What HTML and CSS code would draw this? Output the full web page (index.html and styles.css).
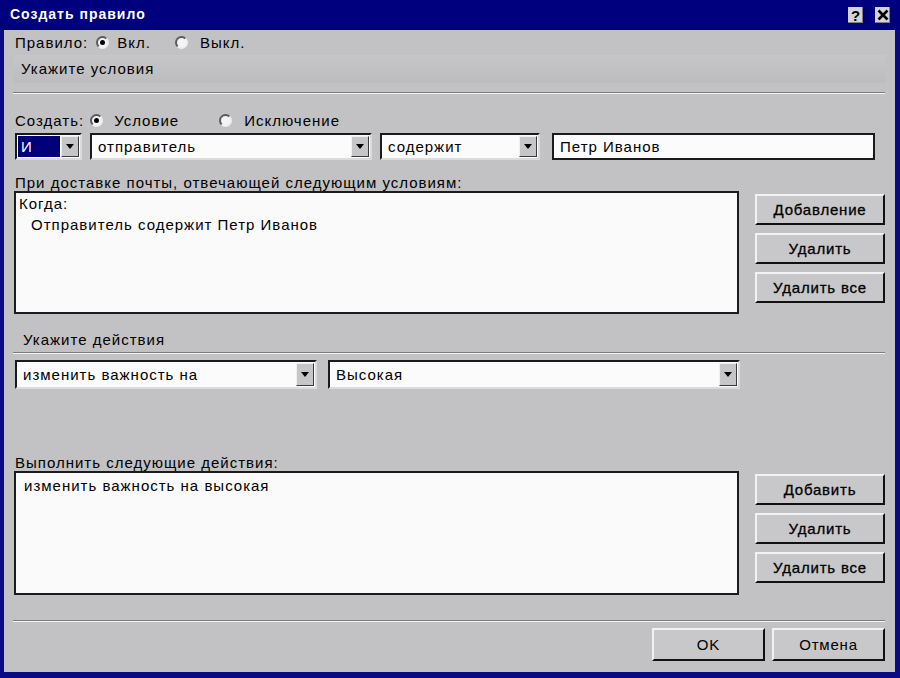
FILE: index.html
```html
<!DOCTYPE html>
<html lang="ru">
<head>
<meta charset="utf-8">
<title>Создать правило</title>
<link rel="stylesheet" href="styles.css">
</head>
<body>
<div class="window">
  <div class="titlebar">
    <span class="title">Создать правило</span>
    <div class="title-btns">
      <span class="tbtn">?</span>
      <span class="tbtn close">
        <svg width="12" height="12" viewBox="0 0 12 12"><path d="M1.5 1.5 L10.5 10.5 M10.5 1.5 L1.5 10.5" stroke="#000" stroke-width="2.6"/></svg>
      </span>
    </div>
  </div>
  <div class="body">
    <div class="row rule-row">
      <span class="lbl">Правило:</span>
      <span class="radio on"></span><span class="lbl r-text">Вкл.</span>
      <span class="radio r2"></span><span class="lbl r-text2">Выкл.</span>
    </div>
    <div class="section-head">Укажите условия</div>
    <div class="sep"></div>

    <div class="row create-row">
      <span class="lbl">Создать:</span>
      <span class="radio on c1"></span><span class="lbl c-text">Условие</span>
      <span class="radio c2"></span><span class="lbl c-text2">Исключение</span>
    </div>

    <div class="row combo-row">
      <div class="combo w-and"><span class="val selected">И</span><span class="drop"></span></div>
      <div class="combo w-field"><span class="val">отправитель</span><span class="drop"></span></div>
      <div class="combo w-op"><span class="val">содержит</span><span class="drop"></span></div>
      <div class="input w-value">Петр Иванов</div>
    </div>

    <div class="field-label">При доставке почты, отвечающей следующим условиям:</div>
    <div class="list-block">
      <div class="listbox">
        <div class="line">Когда:</div>
        <div class="line indent">Отправитель содержит Петр Иванов</div>
      </div>
      <div class="btn-col">
        <button class="btn">Добавление</button>
        <button class="btn">Удалить</button>
        <button class="btn">Удалить все</button>
      </div>
    </div>

    <div class="section-head2">Укажите действия</div>
    <div class="sep"></div>

    <div class="row action-row">
      <div class="combo w-action"><span class="val">изменить важность на</span><span class="drop"></span></div>
      <div class="combo w-level"><span class="val">Высокая</span><span class="drop"></span></div>
    </div>

    <div class="field-label label2">Выполнить следующие действия:</div>
    <div class="list-block">
      <div class="listbox lb2">
        <div class="line indent2">изменить важность на высокая</div>
      </div>
      <div class="btn-col">
        <button class="btn">Добавить</button>
        <button class="btn">Удалить</button>
        <button class="btn">Удалить все</button>
      </div>
    </div>

    <div class="sep sep-bottom"></div>
    <div class="footer">
      <button class="btn btn-ok">OK</button>
      <button class="btn btn-ok">Отмена</button>
    </div>
  </div>
</div>
</body>
</html>
```

FILE: styles.css
```css
* { box-sizing: border-box; }
html, body {
  margin: 0;
  padding: 0;
  width: 900px;
  height: 678px;
  overflow: hidden;
  background: #00007c;
}
body {
  font-family: "Liberation Sans", Arial, sans-serif;
  font-size: 15px;
  letter-spacing: 1px;
  color: #000;
}
.window {
  width: 900px;
  height: 678px;
  background: #c2c2c4;
  border-left: 4px solid #0a0a86;
  border-right: 5px solid #0a0a86;
  border-bottom: 6px solid #0a0a86;
  display: flex;
  flex-direction: column;
}
.titlebar {
  height: 30px;
  background: #00007e;
  display: flex;
  align-items: center;
  justify-content: space-between;
  margin: 0 -5px 0 -4px;
  padding: 0 5px 0 10px;
}
.title {
  color: #fff;
  font-weight: bold;
  font-size: 14px;
  letter-spacing: 1px;
  margin-top: -2px;
}
.title-btns {
  display: flex;
  gap: 12px;
  margin-right: 5px;
}
.tbtn {
  width: 15px;
  height: 16px;
  background: #d4d4d6;
  display: flex;
  align-items: center;
  justify-content: center;
  font-weight: bold;
  font-size: 15px;
  letter-spacing: 0;
  color: #000;
  box-shadow: inset -1px -1px 0 #808080;
}
.body {
  flex: 1;
  padding: 0 10px 0 11px;
  display: flex;
  flex-direction: column;
}
.row {
  display: flex;
  align-items: center;
}
.rule-row {
  height: 24px;
}
.lbl { white-space: nowrap; }
.radio {
  width: 13px;
  height: 13px;
  border-radius: 50%;
  background: #f4f4f4;
  border: 2px solid;
  border-color: #5a5a5a #eeeeee #eeeeee #5a5a5a;
  position: relative;
  flex: none;
}
.radio.on::after {
  content: "";
  position: absolute;
  left: 2px;
  top: 2px;
  width: 5px;
  height: 5px;
  border-radius: 50%;
  background: #000;
}
.rule-row .radio { margin-left: 8px; }
.rule-row .r-text { margin-left: 8px; }
.rule-row .radio.r2 { margin-left: 24px; }
.rule-row .r-text2 { margin-left: 12px; }

.section-head {
  margin-top: 1px;
  height: 28px;
  line-height: 28px;
  padding-left: 8px;
  margin-left: -2px;
  background: linear-gradient(#c6c6c8, #bdbdbf);
}
.sep {
  height: 2px;
  border-top: 1px solid #7c7c7e;
  border-bottom: 1px solid #f4f4f4;
  margin-top: 9px;
  margin-left: -2px;
}
.create-row {
  margin-top: 14px;
  height: 24px;
}
.create-row .c1 { margin-left: 6px; }
.create-row .c-text { margin-left: 11px; }
.create-row .c2 { margin-left: 40px; }
.create-row .c-text2 { margin-left: 12px; }

.combo-row {
  margin-top: 1px;
  height: 27px;
  gap: 8px;
}
.combo, .input {
  height: 100%;
  background: #fbfbfb;
  border: 2px solid;
  border-color: #1a1a1a #dcdcdc #dcdcdc #1a1a1a;
  display: flex;
  align-items: center;
  position: relative;
}
.combo .val {
  flex: 1;
  padding-left: 6px;
  white-space: nowrap;
  overflow: hidden;
}
.combo .val.selected {
  align-self: stretch;
  background: #00007a;
  color: #fff;
  display: flex;
  align-items: center;
  margin: 1px;
  padding-left: 3px;
}
.drop {
  width: 18px;
  align-self: stretch;
  margin: 1px 1px 1px 0;
  background: #c6c6c8;
  border: 1px solid;
  border-color: #f0f0f0 #3a3a3a #3a3a3a #f0f0f0;
  position: relative;
  flex: none;
}
.drop::after {
  content: "";
  position: absolute;
  left: 50%;
  top: 50%;
  margin-left: -4px;
  margin-top: -3px;
  border-left: 4px solid transparent;
  border-right: 4px solid transparent;
  border-top: 5px solid #000;
}
.w-and { width: 67px; }
.w-field { width: 282px; }
.w-op { width: 160px; }
.w-value {
  width: 323px;
  margin-left: 4px;
  padding-left: 6px;
  border-color: #1a1a1a;
}
.field-label {
  margin-top: 14px;
  height: 17px;
  line-height: 17px;
  white-space: nowrap;
}
.list-block {
  display: flex;
  gap: 16px;
}
.listbox {
  flex: 1;
  height: 123px;
  background: #fafafa;
  border: 2px solid #1c1c1c;
  padding: 0 3px;
  margin-left: -1px;
}
.line {
  height: 21px;
  line-height: 21px;
  white-space: nowrap;
}
.indent { padding-left: 12px; }
.indent2 { padding-left: 5px; margin-top: 2px; }
.btn-col {
  width: 130px;
  flex: none;
  display: flex;
  flex-direction: column;
  gap: 8px;
  padding-top: 3px;
}
.btn {
  font-family: inherit;
  font-size: 15px;
  letter-spacing: 0.8px;
  color: #000;
  height: 31px;
  background: #c8c8ca;
  border: 2px solid;
  border-color: #f2f2f2 #111 #111 #f2f2f2;
  -webkit-text-stroke: 0.3px #000;
  padding: 0;
  margin: 0;
}
.section-head2 {
  margin-top: 14px;
  height: 24px;
  line-height: 24px;
  padding-left: 8px;
}
.section-head2 + .sep { margin-top: 0; }
.action-row {
  margin-top: 6px;
  height: 29px;
  gap: 11px;
}
.w-action { width: 302px; }
.w-level { width: 412px; }
.label2 { margin-top: 65px; }
.lb2 { height: 124px; }
.sep-bottom { margin-top: 25px; }
.footer {
  margin-top: 6px;
  display: flex;
  justify-content: flex-end;
  gap: 7px;
}
.btn-ok {
  width: 113px;
  height: 33px;
  -webkit-text-stroke: 0;
}
```
